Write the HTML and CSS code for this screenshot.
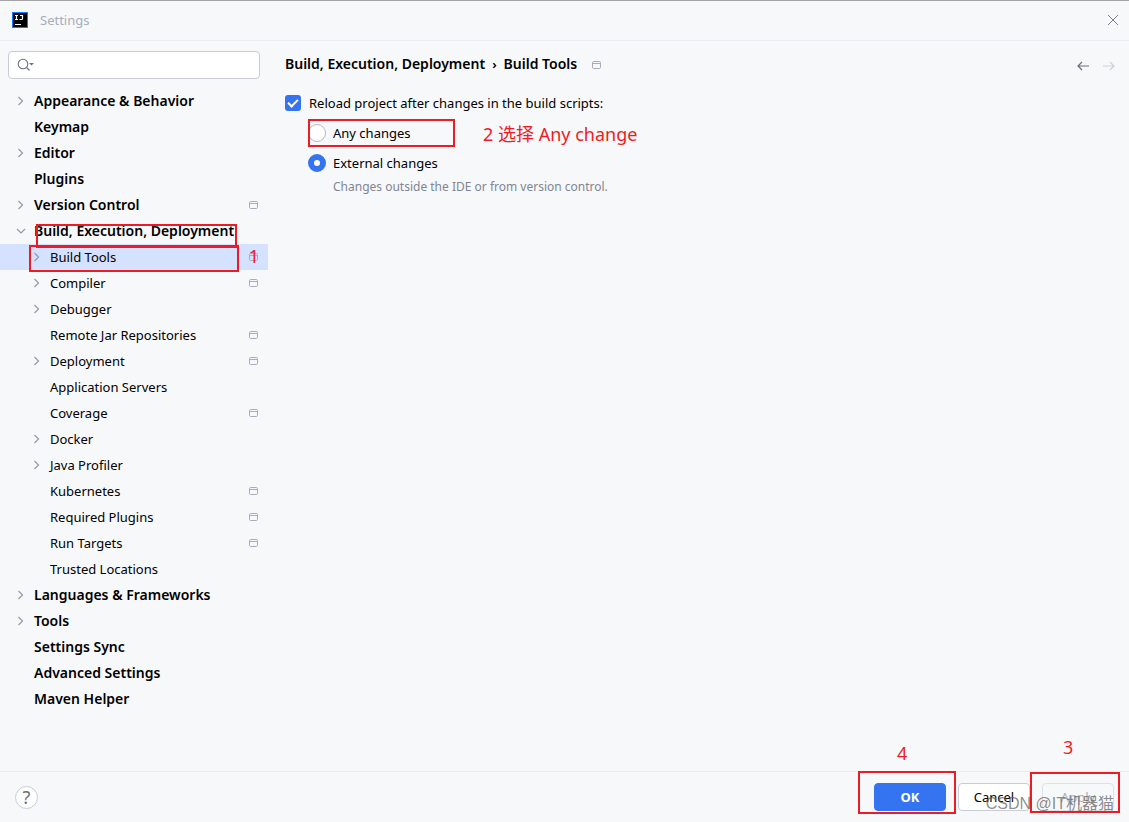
FILE: index.html
```html
<!DOCTYPE html>
<html lang="en">
<head>
<meta charset="utf-8">
<title>Settings</title>
<link rel="stylesheet" href="styles.css">
</head>
<body>
<svg class="sprite" aria-hidden="true">
  <symbol id="right" viewBox="0 0 10 10"><path d="M2.500 1l4 4-4 4" fill="none" stroke="currentColor" stroke-width="1.200"/></symbol>
  <symbol id="down" viewBox="0 0 10 10"><path d="M1 3l4 4 4-4" fill="none" stroke="currentColor" stroke-width="1.200"/></symbol>
  <symbol id="project" viewBox="0 0 9 8"><rect x=".5" y=".5" width="8" height="7" rx="1.200" fill="none" stroke="currentColor"/><path d="M1 2.500h7" stroke="currentColor"/></symbol>
</svg>
<header class="titlebar">
  <svg class="logo" viewBox="0 0 16 16" aria-hidden="true"><rect width="16" height="16" fill="#087cfa"/><rect x="1" y="1" width="14" height="14"/><path d="M3 3.500h3M4.500 3v5M3 7.500h3M8 3.500h3M10.500 3v3.500q0 1-1 1H7.500M3 12.500h6" fill="none" stroke="#fff" stroke-width="1.200"/></svg>
  <h1 class="title">Settings</h1>
  <button class="icon-button" type="button" aria-label="Close"><svg width="12" height="12" viewBox="0 0 12 12"><path d="M1 1l10 10M11 1L1 11" stroke="#6c707e" stroke-width=".9" fill="none"/></svg></button>
</header>
<div class="main">
  <aside class="sidebar">
    <div class="search">
      <svg width="18" height="14" viewBox="0 0 18 14" aria-hidden="true"><circle cx="6" cy="6" r="4.800" fill="none" stroke="#6c707e" stroke-width="1.100"/><path d="M9.500 9.500l3 3" stroke="#6c707e" stroke-width="1.100"/><path d="M12 5h5l-2.500 2.500z" fill="#6c707e"/></svg>
      <input class="search-input" type="text" aria-label="Search settings">
    </div>
    <nav class="tree" aria-label="Settings categories">
      <a class="row" href="#"><svg class="chevron"><use href="#right"/></svg><span class="name">Appearance &amp; Behavior</span></a>
      <a class="row" href="#"><span class="chevron"></span><span class="name">Keymap</span></a>
      <a class="row" href="#"><svg class="chevron"><use href="#right"/></svg><span class="name">Editor</span></a>
      <a class="row" href="#"><span class="chevron"></span><span class="name">Plugins</span></a>
      <a class="row" href="#"><svg class="chevron"><use href="#right"/></svg><span class="name">Version Control</span><svg class="project"><use href="#project"/></svg></a>
      <a class="row" href="#"><svg class="chevron"><use href="#down"/></svg><span class="name">Build, Execution, Deployment</span><span class="mark mark-group"></span></a>
      <a class="row child selected" href="#" aria-current="page"><svg class="chevron"><use href="#right"/></svg><span class="name">Build Tools</span><svg class="project"><use href="#project"/></svg><span class="mark mark-tools"></span><span class="note note-one">1</span></a>
      <a class="row child" href="#"><svg class="chevron"><use href="#right"/></svg><span class="name">Compiler</span><svg class="project"><use href="#project"/></svg></a>
      <a class="row child" href="#"><svg class="chevron"><use href="#right"/></svg><span class="name">Debugger</span></a>
      <a class="row child" href="#"><span class="chevron"></span><span class="name">Remote Jar Repositories</span><svg class="project"><use href="#project"/></svg></a>
      <a class="row child" href="#"><svg class="chevron"><use href="#right"/></svg><span class="name">Deployment</span><svg class="project"><use href="#project"/></svg></a>
      <a class="row child" href="#"><span class="chevron"></span><span class="name">Application Servers</span></a>
      <a class="row child" href="#"><span class="chevron"></span><span class="name">Coverage</span><svg class="project"><use href="#project"/></svg></a>
      <a class="row child" href="#"><svg class="chevron"><use href="#right"/></svg><span class="name">Docker</span></a>
      <a class="row child" href="#"><svg class="chevron"><use href="#right"/></svg><span class="name">Java Profiler</span></a>
      <a class="row child" href="#"><span class="chevron"></span><span class="name">Kubernetes</span><svg class="project"><use href="#project"/></svg></a>
      <a class="row child" href="#"><span class="chevron"></span><span class="name">Required Plugins</span><svg class="project"><use href="#project"/></svg></a>
      <a class="row child" href="#"><span class="chevron"></span><span class="name">Run Targets</span><svg class="project"><use href="#project"/></svg></a>
      <a class="row child" href="#"><span class="chevron"></span><span class="name">Trusted Locations</span></a>
      <a class="row" href="#"><svg class="chevron"><use href="#right"/></svg><span class="name">Languages &amp; Frameworks</span></a>
      <a class="row" href="#"><svg class="chevron"><use href="#right"/></svg><span class="name">Tools</span></a>
      <a class="row" href="#"><span class="chevron"></span><span class="name">Settings Sync</span></a>
      <a class="row" href="#"><span class="chevron"></span><span class="name">Advanced Settings</span></a>
      <a class="row" href="#"><span class="chevron"></span><span class="name">Maven Helper</span></a>
    </nav>
  </aside>
  <main class="content">
    <div class="crumbs">
      <a class="crumb" href="#">Build, Execution, Deployment</a>
      <span class="separator">›</span>
      <h2 class="crumb">Build Tools</h2>
      <svg class="project"><use href="#project"/></svg>
      <div class="history">
        <button class="icon-button" type="button" aria-label="Back"><svg width="12" height="10" viewBox="0 0 12 10"><path d="M12 5H1M5 1L1 5l4 4" stroke="#6c707e" stroke-width="1.200" fill="none"/></svg></button>
        <button class="icon-button" type="button" aria-label="Forward" disabled><svg width="12" height="10" viewBox="0 0 12 10"><path d="M0 5h11M7 1l4 4-4 4" stroke="#cfd0d4" stroke-width="1.200" fill="none"/></svg></button>
      </div>
    </div>
    <label class="option" for="reload"><input class="check" type="checkbox" id="reload" checked>Reload project after changes in the build scripts:</label>
    <div class="choices">
      <div class="choice">
        <label class="option" for="any"><input class="radio" type="radio" name="scope" id="any">Any changes</label>
        <span class="mark mark-any"></span>
        <span class="note note-two">2 选择 Any change</span>
      </div>
      <label class="option" for="external"><input class="radio" type="radio" name="scope" id="external" checked>External changes</label>
      <p class="hint">Changes outside the IDE or from version control.</p>
    </div>
  </main>
</div>
<footer class="footer">
  <button class="help" type="button" aria-label="Help">?</button>
  <div class="actions">
    <div class="action"><button class="button primary" type="button">OK</button><span class="mark mark-ok"></span><span class="note note-four">4</span></div>
    <div class="action"><button class="button" type="button">Cancel</button></div>
    <div class="action"><button class="button" type="button" disabled>Apply</button><span class="mark mark-apply"></span><span class="note note-three">3</span></div>
  </div>
  <span class="watermark">CSDN @IT机器猫</span>
</footer>
</body>
</html>
```

FILE: styles.css
```css
*, *::before { box-sizing: border-box; }

body {
  display: flex;
  flex-direction: column;
  min-height: 100vh;
  margin: 0;
  background: #f7f8fa;
  color: #000;
  font: 13px/20px "Noto Sans", "Noto Sans CJK SC", sans-serif;
}

.sprite { position: absolute; width: 0; height: 0; }

.titlebar {
  display: flex;
  align-items: center;
  height: 41px;
  padding: 0 10px 2px 12px;
  border-top: 1px solid #a3a3a6;
  border-bottom: 1px solid #ebecf0;
}

.logo { width: 16px; height: 16px; }

.title {
  flex: 1;
  margin: 0 0 0 12px;
  color: #a8adbd;
  font-size: 13px;
  font-weight: 400;
}

.icon-button {
  display: flex;
  padding: 0;
  border: 0;
  background: none;
}

.main { display: flex; flex: 1; }

.sidebar { width: 268px; flex-shrink: 0; padding-top: 10px; }

.search {
  display: flex;
  align-items: center;
  height: 28px;
  margin: 0 8px 9px;
  padding: 0 8px;
  border: 1px solid #c9ccd6;
  border-radius: 4px;
  background: #fff;
}

.search-input {
  flex: 1;
  min-width: 0;
  border: 0;
  outline: 0;
  background: none;
  font: inherit;
}

.row {
  position: relative;
  display: flex;
  align-items: center;
  height: 26px;
  padding: 0 10px 0 16px;
  color: #000;
  font-size: 14px;
  font-weight: 600;
  text-decoration: none;
}

.child { padding-left: 32px; font-size: 13px; font-weight: 400; }
.selected { background: #d4e2ff; }

.chevron { width: 10px; height: 10px; margin-right: 8px; color: #9599a8; }
.name { flex: 1; white-space: nowrap; }
.project { width: 9px; height: 8px; color: #a8adbd; }

.content { flex: 1; padding: 13px 14px 0 17px; }

.crumbs { display: flex; align-items: center; margin-bottom: 19px; }

.crumb {
  margin: 0;
  color: #000;
  font-size: 14px;
  font-weight: 600;
  text-decoration: none;
}

.separator { margin: 0 7px; font-weight: 600; }
.crumbs .project { margin: 2px 0 0 15px; }
.history { display: flex; gap: 14px; margin-left: auto; padding-top: 4px; }

.option { display: flex; align-items: center; gap: 8px; width: max-content; }

.check, .radio {
  flex-shrink: 0;
  width: 16px;
  height: 16px;
  margin: 0;
  appearance: none;
  border: 1px solid #c9ccd6;
  background: #fff;
}

.check {
  display: grid;
  align-items: start;
  justify-content: center;
  padding-top: 4px;
  border-radius: 3px;
}

.check:checked {
  border: 0;
  background: #3574f0;
}

.check:checked::before {
  width: 10px;
  height: 6px;
  border: solid #fff;
  border-width: 0 0 2px 2px;
  content: "";
  transform: rotate(-45deg);
}

.radio {
  width: 18px;
  height: 18px;
  margin: 0 -1px;
  border-color: #b5b9c7;
  border-radius: 50%;
}

.radio:checked { border: 6px solid #3574f0; }

.choices {
  display: flex;
  flex-direction: column;
  gap: 10px;
  padding: 10px 0 0 24px;
}

.choice { position: relative; }
.hint { margin: -6px 0 0 24px; color: #818594; font-size: 12px; }

.footer {
  position: relative;
  display: flex;
  align-items: center;
  justify-content: space-between;
  height: 51px;
  padding: 0 15px;
  border-top: 1px solid #ebecf0;
}

.help {
  width: 23px;
  height: 23px;
  padding: 0;
  border: 1px solid #c9ccd6;
  border-radius: 50%;
  background: #fff;
  color: #6c707e;
  font: 18px/20px "Noto Sans", sans-serif;
}

.actions { display: flex; gap: 12px; }
.action { position: relative; }

.button {
  display: block;
  width: 72px;
  height: 28px;
  padding: 0;
  border: 1px solid #c9ccd6;
  border-radius: 4px;
  background: #fff;
  color: #000;
  font: inherit;
}

.button:disabled { border-color: #dfe1e6; background: none; color: #a8adbd; }
.primary { border-color: #3574f0; background: #3574f0; color: #fff; font-weight: 700; }

/* Red step markers over the dialog */
.mark { position: absolute; z-index: 1; border: 2px solid #ed1c24; pointer-events: none; }
.mark-group { top: 6px; left: 36px; width: 201px; height: 24px; }
.mark-tools { top: 1px; left: 29px; width: 210px; height: 27px; }
.mark-any { top: -4px; left: -1px; width: 147px; height: 28px; }
.mark-ok { inset: -12px -10px -3px -16px; }
.mark-apply { inset: -11px -6px -2px -12px; }

.note { position: absolute; color: #ed1c24; font-size: 18px; font-weight: 400; line-height: 24px; white-space: nowrap; }
.note-one { top: 0; right: 9px; }
.note-two { top: -1px; left: 174px; }
.note-three { top: -48px; left: 21px; }
.note-four { top: -42px; left: 23px; }

.watermark {
  position: absolute;
  z-index: 2;
  right: 15px;
  bottom: 6px;
  color: rgba(90, 90, 90, 0.7);
  font: 16px/24px "Liberation Sans", "Noto Sans CJK SC", sans-serif;
  pointer-events: none;
}
```
